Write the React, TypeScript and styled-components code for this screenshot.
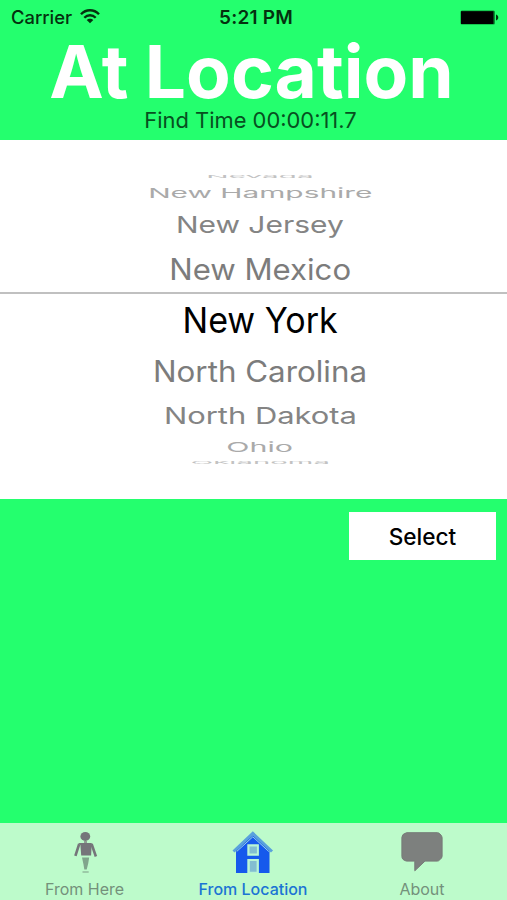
import React from "react";
import styled, { createGlobalStyle } from "styled-components";

const GlobalStyle = createGlobalStyle`
  * { box-sizing: border-box; }
  body { margin: 0; background: #24ff6e; }
`;

const Screen = styled.main`
  display: flex;
  flex-direction: column;
  width: 100%;
  height: 900px;
  overflow: hidden;
  background: #24ff6e;
  color: #000;
  font-family: Inter, "Liberation Sans", sans-serif;
  white-space: nowrap;
`;

const StatusBar = styled.div`
  display: grid;
  grid-template-columns: 1fr auto 1fr;
  align-items: center;
  height: 35px;
  padding: 0 8px 0 11px;
  color: #04310f;
`;

const Carrier = styled.div`
  display: flex;
  align-items: center;
  gap: 8px;
  height: 33px;
  align-self: start;
  font-size: 18.4px;
  font-weight: 500;
`;

const Clock = styled.div`
  padding-left: 2px;
  font-size: 19px;
  font-weight: 600;
  letter-spacing: 0.2px;
`;

const Battery = styled.svg`
  justify-self: end;
`;

const Header = styled.header`
  display: flex;
  flex-direction: column;
  align-items: center;
  height: 105px;
  padding-right: 4px;
`;

const Title = styled.h1`
  margin: 0;
  color: #fff;
  font-size: 73px;
  font-weight: 700;
  line-height: 73px;
  word-spacing: -1px;
`;

const FindTime = styled.p`
  margin: 0 2px 0 0;
  color: #07501f;
  font-size: 21.9px;
  line-height: 25px;
`;

const Picker = styled.div`
  display: flex;
  flex-direction: column;
  height: 359px;
  padding: 33px 0 0 13px;
  background: #fff;
`;

const PickerRow = styled.div<{ $height: number; $color: string }>`
  position: relative;
  display: flex;
  flex: none;
  align-items: center;
  justify-content: center;
  height: ${(p) => p.$height}px;
  color: ${(p) => p.$color};
`;

const RowLabel = styled.span<{ $x: number; $y: number }>`
  font-size: 36px;
  line-height: 36px;
  transform: scale(${(p) => p.$x}, ${(p) => p.$y});
`;

const SelectionLine = styled.div`
  position: absolute;
  top: -2px;
  left: -13px;
  right: 0;
  height: 2px;
  background: #c0c0c0;
`;

const Actions = styled.section`
  display: flex;
  flex: 1;
  align-items: flex-start;
  justify-content: flex-end;
  padding: 13px 11px 0 0;
`;

const SelectButton = styled.button`
  width: 147px;
  height: 48px;
  padding: 0;
  border: 0;
  background: #fff;
  color: #000;
  font: 500 22.6px Inter, sans-serif;
`;

const TabBar = styled.nav`
  display: grid;
  grid-template-columns: 169px 1fr 170px;
  height: 77px;
  background: #bdfbcb;
`;

const Tab = styled.a<{ $active?: boolean }>`
  display: flex;
  flex-direction: column;
  align-items: center;
  padding-top: 8px;
  color: ${(p) => (p.$active ? "#1b74d4" : "#74917b")};
  font-size: 16px;
  font-weight: ${(p) => (p.$active ? 500 : 400)};
  line-height: 20px;
`;

const TabIcon = styled.svg`
  display: block;
  flex: none;
  margin-bottom: 5px;
`;

type Entry = { name: string; height: number; x: number; y: number; color: string; selected?: boolean };

const states: Entry[] = [
  { name: "Nevada", height: 8, x: 0.825, y: 0.11, color: "#c2c2c2" },
  { name: "New Hampshire", height: 24, x: 0.829, y: 0.37, color: "#aaa" },
  { name: "New Jersey", height: 39, x: 0.832, y: 0.63, color: "#848484" },
  { name: "New Mexico", height: 50, x: 0.865, y: 0.82, color: "#7c7c7c" },
  { name: "New York", height: 52, x: 0.945, y: 1, color: "#000", selected: true },
  { name: "North Carolina", height: 50, x: 0.87, y: 0.82, color: "#7c7c7c" },
  { name: "North Dakota", height: 39, x: 0.858, y: 0.63, color: "#848484" },
  { name: "Ohio", height: 24, x: 0.845, y: 0.37, color: "#aaa" },
  { name: "Oklahoma", height: 7, x: 0.815, y: 0.11, color: "#c2c2c2" },
];

const WifiIcon = () => (
  <svg width="20" height="15" viewBox="0 0 20 15" fill="none" stroke="currentColor">
    <path d="M1 5.2C6-.1 14-.1 19 5.2" strokeWidth="2.4" />
    <path d="M4.3 8.7c3.2-3.3 8.2-3.3 11.4 0" strokeWidth="2.3" />
    <path d="M10 14.3 6.7 11.1c1.8-1.8 4.8-1.8 6.6 0z" fill="currentColor" stroke="none" />
  </svg>
);

const PersonIcon = () => (
  <TabIcon width="26" height="43" viewBox="0 0 26 43" fill="#75757a">
    <ellipse cx="13.3" cy="5.4" rx="4.9" ry="4.5" />
    <path d="M12 10h3v2h-3z" fill="#8f9f94" />
    <path d="M6.3 12h13.5l-.7 12.5H9.2L8.4 14z" />
    <path d="M7.2 13 3.4 24.8M19.6 13l4.3 12.5" stroke="#75757a" strokeWidth="2.6" fill="none" />
    <path d="M10 26.4h7.2l-1 6-1.5 6h-2.4l-.8-5z" fill="#80a58c" />
    <path d="M10.5 40.3h6.2v1.4h-6.2z" fill="#8fb69a" />
  </TabIcon>
);

const HouseIcon = () => (
  <TabIcon width="42" height="43" viewBox="0 0 42 43">
    <path d="M4 18 20.8 4 37.5 18v24H4z" fill="#1659ec" />
    <path d="M1.5 20.5 20.8 2.4 40 20.5" fill="none" stroke="#5aa2dc" strokeWidth="3" />
    <path d="M4.7 20.5 20.8 5.8l16 14.7" fill="none" stroke="#9cd5e5" strokeWidth="1" />
    <path d="M15.3 13.2h11.6v11.5H15.3zM15.3 28h11.6v14H15.3z" fill="#baf5d5" />
    <path d="M17.5 15.4h7.4v7.2h-7.4zM17.8 30h6.8v10.8h-6.8z" fill="#83bed1" />
  </TabIcon>
);

const SpeechIcon = () => (
  <TabIcon width="42" height="43" viewBox="0 0 42 43">
    <path
      d="M5.5 1.7h30.8q1.5 0 2.5 1.1 2.3 2 2.3 3.7v18.8q0 1.700-2.300 3.500-1.100 1.300-2.500 1.300H24L13.800 39.800V30.100H5.500Q.9 29 .9 25.500V6.300Q.9 3 5.500 1.700z"
      fill="#7d807e"
      stroke="#777b78"
      strokeWidth="1"
      strokeLinejoin="round"
    />
  </TabIcon>
);

export default function App() {
  return (
    <Screen>
      <GlobalStyle />
      <StatusBar>
        <Carrier>
          Carrier
          <WifiIcon />
        </Carrier>
        <Clock>5:21 PM</Clock>
        <Battery width="39" height="15" viewBox="0 0 39 15">
          <rect x=".5" y=".5" width="34.5" height="14" rx="1.5" fill="#079332" />
          <rect x="1" y="1.2" width="32.5" height="12.8" fill="#000" />
          <path d="M36 4.5c3 .8 3 5.2 0 6z" fill="#04310f" />
        </Battery>
      </StatusBar>
      <Header>
        <Title>At Location</Title>
        <FindTime>Find Time 00:00:11.7</FindTime>
      </Header>
      <Picker>
        {states.map((s) => (
          <PickerRow key={s.name} $height={s.height} $color={s.color}>
            {s.selected && <SelectionLine />}
            <RowLabel $x={s.x} $y={s.y}>
              {s.name}
            </RowLabel>
          </PickerRow>
        ))}
      </Picker>
      <Actions>
        <SelectButton>Select</SelectButton>
      </Actions>
      <TabBar>
        <Tab>
          <PersonIcon />
          From Here
        </Tab>
        <Tab $active>
          <HouseIcon />
          From Location
        </Tab>
        <Tab>
          <SpeechIcon />
          About
        </Tab>
      </TabBar>
    </Screen>
  );
}
